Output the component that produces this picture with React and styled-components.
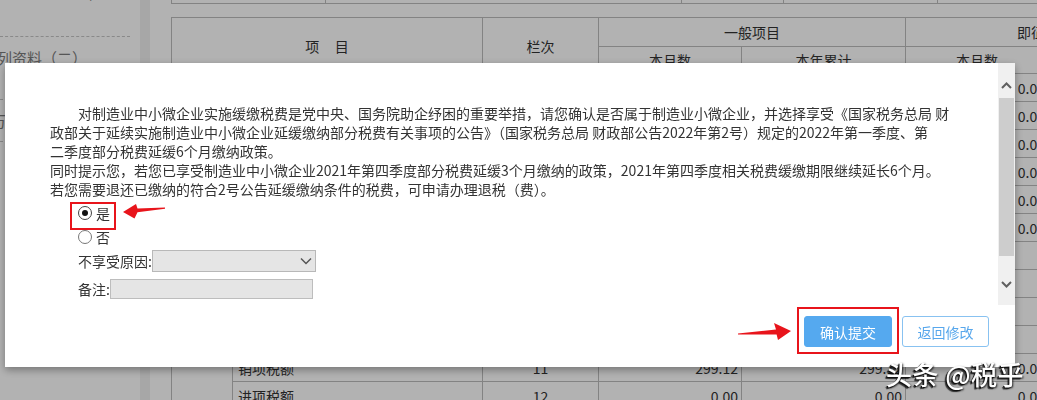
import React from 'react';
import styled, { createGlobalStyle } from 'styled-components';

const GlobalStyle = createGlobalStyle`
  html, body {
    margin: 0;
    padding: 0;
    height: 100%;
    overflow: hidden;
    background: #fff;
  }
  body {
    font-family: "Noto Sans CJK SC", "Liberation Sans", sans-serif;
    font-size: 14px;
    color: #333;
  }
`;

const Page = styled.div`
  display: flex;
  height: 100vh;
  overflow: hidden;
`;

const Sidebar = styled.div`
  width: 150px;
  flex-shrink: 0;
  box-sizing: border-box;
  border-right: 10px solid #f0f0f0;
  padding-right: 10px;
  overflow: hidden;
`;

const SideList = styled.div`
  margin-top: -19px;
`;

const SideItem = styled.div`
  padding: ${(p) => (p.$first ? '0 0 34px' : '10px 0')};
  border-bottom: 1px dashed #c4c4c4;
  font-size: 15px;
  line-height: 21px;
  color: #7c7c7c;
  white-space: nowrap;
  text-indent: ${(p) => p.$indent || 0}px;
`;

const Main = styled.div`
  flex: 1;
  padding-left: 21px;
  overflow: hidden;
`;

const Table = styled.table`
  border-collapse: collapse;
  table-layout: fixed;
  width: ${(p) => p.$width}px;
  margin-top: ${(p) => p.$top}px;
  font-size: 14px;
  color: #333;

  td, th {
    border: 1px solid #bcbcbc;
    padding: 0 3px;
    font-weight: normal;
    white-space: nowrap;
    overflow: hidden;
  }
`;

const Row = styled.tr`
  height: ${(p) => p.$h || 28}px;
`;

const Cell = styled.td`
  text-align: ${(p) => p.$align || 'left'};
  padding-left: ${(p) => (p.$align === 'left' ? '5px' : '3px')} !important;
`;

const Mask = styled.div`
  position: fixed;
  inset: 0;
  background: rgba(0, 0, 0, 0.3);
`;

const Dialog = styled.div`
  position: fixed;
  left: 5px;
  top: 63px;
  width: 1010px;
  height: 304px;
  background: #fff;
  box-shadow: 0 3px 8px rgba(0, 0, 0, 0.35);
  display: flex;
  flex-direction: column;
`;

const DialogBody = styled.div`
  display: flex;
  height: 242px;
  flex-shrink: 0;
`;

const Content = styled.div`
  flex: 1;
  padding: 41px 0 0 45px;
  font-size: 14px;
  line-height: 19px;
  color: #333;
  white-space: nowrap;
`;

const Para = styled.p`
  margin: 0;
  text-indent: ${(p) => (p.$indent ? '28px' : '0')};
`;

const Options = styled.div`
  padding-left: 28px;
  margin-top: 2px;
`;

const OptionRow = styled.div`
  display: flex;
  align-items: center;
  height: 24px;
`;

const OptionInner = styled.label`
  position: relative;
  display: flex;
  align-items: center;
  gap: 4px;

  &::after {
    content: '';
    display: ${(p) => (p.$marked ? 'block' : 'none')};
    position: absolute;
    left: -8px;
    top: -2px;
    width: 46px;
    height: 28px;
    border: 2px solid #e8141b;
    box-sizing: border-box;
  }
`;

const Radio = styled.span`
  width: 12px;
  height: 12px;
  border-radius: 50%;
  border: 1px solid ${(p) => (p.$checked ? '#444' : '#777')};
  background: #fff;
  display: flex;
  align-items: center;
  justify-content: center;

  &::before {
    content: '';
    display: ${(p) => (p.$checked ? 'block' : 'none')};
    width: 6px;
    height: 6px;
    border-radius: 50%;
    background: #111;
  }
`;

const FieldRow = styled.div`
  display: flex;
  align-items: center;
  margin-top: ${(p) => p.$top}px;
`;

const SelectBox = styled.div`
  width: 164px;
  height: 22px;
  box-sizing: border-box;
  border: 1px solid #b8b8b8;
  background: #e5e5e5;
  display: flex;
  align-items: center;
  justify-content: flex-end;
  padding-right: 3px;
`;

const InputBox = styled.div`
  width: 203px;
  height: 20px;
  box-sizing: border-box;
  border: 1px solid #bdbdbd;
  background: #e5e5e5;
`;

const ScrollBar = styled.div`
  width: 17px;
  background: #f0f0f0;
  display: flex;
  flex-direction: column;
  align-items: center;
`;

const ScrollArrow = styled.div`
  height: 17px;
  width: 17px;
  margin-top: ${(p) => p.$top}px;
  display: flex;
  align-items: center;
  justify-content: center;
`;

const Thumb = styled.div`
  width: 15px;
  height: 158px;
  margin-top: 4px;
  background: #cdcdcd;
`;

const Footer = styled.div`
  flex: 1;
  display: flex;
  justify-content: flex-end;
  align-items: flex-start;
  padding: 2px 26px 0 0;
`;

const ConfirmFrame = styled.div`
  border: 2px solid #e8141b;
  padding: 7px 5px 5px;
  margin-left: 5px;
`;

const Button = styled.button`
  width: ${(p) => (p.$primary ? 88 : 87)}px;
  height: 31px;
  border-radius: 3px;
  font-family: "Noto Sans CJK SC", sans-serif;
  font-size: 14px;
  cursor: pointer;
  border: 1px solid ${(p) => (p.$primary ? '#55a9ef' : '#88c2f1')};
  background: ${(p) => (p.$primary ? '#55a9ef' : '#fff')};
  color: ${(p) => (p.$primary ? '#fff' : '#57a7ec')};
  margin-top: ${(p) => (p.$primary ? 0 : 9)}px;
  margin-left: ${(p) => (p.$primary ? 0 : 3)}px;
  padding: 0;
`;

const ArrowSvg = styled.svg`
  flex-shrink: 0;
  margin-top: ${(p) => p.$top || 0}px;
  margin-left: ${(p) => p.$left || 0}px;
  align-self: flex-start;
`;

const Watermark = styled.div`
  position: fixed;
  left: 886px;
  top: 359px;
  font-size: 26px;
  line-height: 30px;
  font-weight: 500;
  letter-spacing: 0.5px;
  color: #fff;
  white-space: nowrap;
  text-shadow: -1px 1px 0 #111, -2px 2px 1px rgba(0, 0, 0, 0.7), 1px 1px 2px rgba(0, 0, 0, 0.8);
`;

const Chevron = ({ down }) => (
  <svg width="11" height="7" viewBox="0 0 11 7">
    <polyline
      points={down ? '1,1 5.5,5.5 10,1' : '1,6 5.5,1.5 10,6'}
      fill="none"
      stroke="#606060"
      strokeWidth="2"
    />
  </svg>
);

const rows = [
  { no: 1, tail: '0.00' },
  { no: 2, tail: '0.00' },
  { no: 3, tail: '0.00' },
  { no: 4, tail: '0.00' },
  { no: 5, tail: '0.00' },
  { no: 6, tail: '0.00' },
  { no: 7 },
  { no: 8 },
  { no: 9 },
  { no: 10 },
  { no: 11, name: '销项税额', a: '299.12', b: '299.12', tail: '0.00' },
  { no: 12, name: '进项税额', a: '0.00', b: '0.00', tail: '0.00' },
];

const App = () => {
  return (
    <>
      <GlobalStyle />
      <Page>
        <Sidebar>
          <SideList>
            <SideItem $first $indent={-3}>列资料（一）(附</SideItem>
            <SideItem $indent={-3}>
              列资料（二）
              <br />
              &nbsp;
            </SideItem>
            <SideItem $indent={-9}>万</SideItem>
          </SideList>
        </Sidebar>

        <Main>
          <Table $width={1000} $top={-25}>
            <colgroup>
              <col style={{ width: 154 }} />
              <col style={{ width: 356 }} />
              <col style={{ width: 102 }} />
              <col style={{ width: 154 }} />
              <col style={{ width: 234 }} />
            </colgroup>
            <tbody>
              <Row>
                <td />
                <td />
                <td />
                <td />
                <td />
              </Row>
            </tbody>
          </Table>

          <Table $width={1041} $top={13}>
            <colgroup>
              <col style={{ width: 61 }} />
              <col style={{ width: 250 }} />
              <col style={{ width: 116 }} />
              <col style={{ width: 143 }} />
              <col style={{ width: 164 }} />
              <col style={{ width: 143 }} />
              <col style={{ width: 164 }} />
            </colgroup>
            <thead>
              <Row $h={29}>
                <th colSpan={2} rowSpan={2}>项&nbsp;&nbsp;&nbsp;&nbsp;&nbsp;目</th>
                <th rowSpan={2}>栏次</th>
                <th colSpan={2}>一般项目</th>
                <th colSpan={2}>即征即退项目</th>
              </Row>
              <Row $h={27}>
                <th>本月数</th>
                <th>本年累计</th>
                <th>本月数</th>
                <th>本年累计</th>
              </Row>
            </thead>
            <tbody>
              {rows.map((r, i) => (
                <Row key={r.no}>
                  {i === 0 && <td rowSpan={12} />}
                  <Cell $align="left">{r.name}</Cell>
                  <Cell $align="center">{r.name ? r.no : ''}</Cell>
                  <Cell $align="right">{r.a}</Cell>
                  <Cell $align="right">{r.b}</Cell>
                  <Cell $align="right">{r.tail}</Cell>
                  <Cell $align="right" />
                </Row>
              ))}
            </tbody>
          </Table>
        </Main>
      </Page>

      <Mask />

      <Dialog>
        <DialogBody>
          <Content>
            <Para $indent>
              对制造业中小微企业实施缓缴税费是党中央、国务院助企纾困的重要举措，请您确认是否属于制造业小微企业，并选择享受《国家税务总局 财
              <br />
              政部关于延续实施制造业中小微企业延缓缴纳部分税费有关事项的公告》（国家税务总局 财政部公告2022年第2号）规定的2022年第一季度、第
              <br />
              二季度部分税费延缓6个月缴纳政策。
            </Para>
            <Para>
              同时提示您，若您已享受制造业中小微企业2021年第四季度部分税费延缓3个月缴纳的政策，2021年第四季度相关税费缓缴期限继续延长6个月。
            </Para>
            <Para>若您需要退还已缴纳的符合2号公告延缓缴纳条件的税费，可申请办理退税（费）。</Para>

            <Options>
              <OptionRow>
                <OptionInner $marked>
                  <Radio $checked />
                  是
                </OptionInner>
                <ArrowSvg width="44" height="18" viewBox="0 0 44 18" $left={12} $top={1}>
                  <polygon
                    points="1,10 14,2 15.5,6.5 43,5.6 43,6.8 15.5,10.2 12.5,16.5"
                    fill="#e8141b"
                  />
                </ArrowSvg>
              </OptionRow>
              <OptionRow>
                <OptionInner>
                  <Radio />
                  否
                </OptionInner>
              </OptionRow>
              <FieldRow $top={1}>
                不享受原因:
                <SelectBox>
                  <svg width="12" height="8" viewBox="0 0 12 8">
                    <polyline points="1,1.5 6,6.5 11,1.5" fill="none" stroke="#555" strokeWidth="1.5" />
                  </svg>
                </SelectBox>
              </FieldRow>
              <FieldRow $top={7}>
                备注:
                <InputBox />
              </FieldRow>
            </Options>
          </Content>

          <ScrollBar>
            <ScrollArrow $top={14}>
              <Chevron />
            </ScrollArrow>
            <Thumb />
            <ScrollArrow $top={20}>
              <Chevron down />
            </ScrollArrow>
          </ScrollBar>
        </DialogBody>

        <Footer>
          <ArrowSvg width="54" height="20" viewBox="0 0 54 20" $top={15}>
            <polygon
              points="0,11.6 38,7.6 36,1 53,9 40,18 38.6,12.6 0,12.6"
              fill="#e8141b"
            />
          </ArrowSvg>
          <ConfirmFrame>
            <Button $primary>确认提交</Button>
          </ConfirmFrame>
          <Button>返回修改</Button>
        </Footer>
      </Dialog>

      <Watermark>头条 @税乎</Watermark>
    </>
  );
};

export default App;
